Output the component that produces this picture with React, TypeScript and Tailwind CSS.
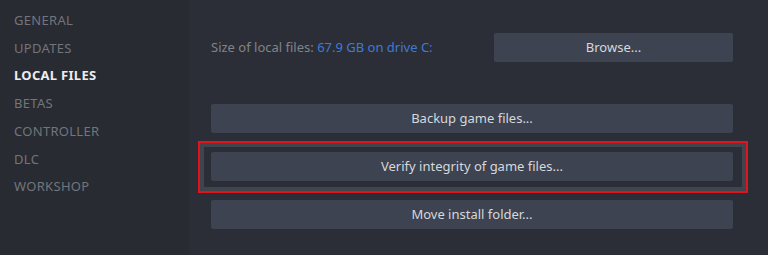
const TABS = ["General", "Updates", "Local Files", "Betas", "Controller", "DLC", "Workshop"];

function Btn({ label, className = "w-full" }: { label: string; className?: string }) {
  return (
    <button
      className={
        "h-[29px] bg-[#3d4350] text-[13px] text-[#d6d8db] rounded-[2px] flex items-center justify-center " +
        className
      }
    >
      {label}
    </button>
  );
}

export default function App() {
  return (
    <div
      className="w-[768px] h-[255px] flex bg-[#2b2e36] overflow-hidden"
      style={{ fontFamily: '"Noto Sans", "Open Sans", sans-serif' }}
    >
      {/* sidebar */}
      <nav className="w-[189px] h-full bg-[#282b32] pt-[7px] pl-[14px]">
        {TABS.map((t) => (
          <div
            key={t}
            className={
              "h-[27.7px] flex items-center text-[13px] uppercase tracking-[0.3px] " +
              (t === "Local Files" ? "text-[#ebedef] font-bold" : "text-[#72757c]")
            }
          >
            {t}
          </div>
        ))}
      </nav>

      {/* main */}
      <main className="flex-1 pl-[22px] pr-[35px] pt-[33px]">
        <div className="flex items-center justify-between h-[29px]">
          <span className="text-[13px] text-[#80838a] whitespace-nowrap">
            Size of local files: <span className="text-[#3f7ad8]">67.9 GB on drive C:</span>
          </span>
          <Btn label="Browse..." className="w-[239px] shrink-0" />
        </div>

        <div className="mt-[42px] flex flex-col gap-[19px]">
          <Btn label="Backup game files..." />
          <div className="relative">
            <Btn label="Verify integrity of game files..." />
            <div className="absolute -left-[13px] -right-[15px] -top-[11px] -bottom-[12px] border-2 border-[#e0141a] shadow-[inset_0_0_0_4px_rgba(90,95,105,0.45)] pointer-events-none" />
          </div>
          <Btn label="Move install folder..." />
        </div>
      </main>
    </div>
  );
}
